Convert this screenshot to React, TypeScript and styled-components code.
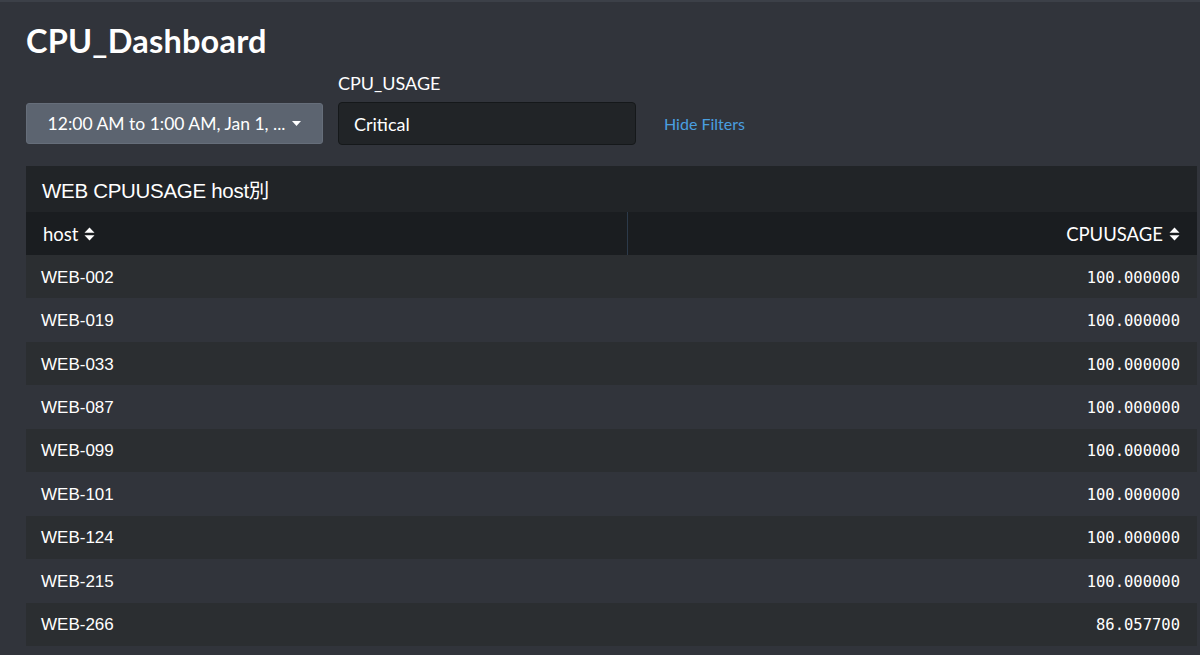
import styled, { createGlobalStyle } from "styled-components";

const rows = [
  { host: "WEB-002", usage: "100.000000" },
  { host: "WEB-019", usage: "100.000000" },
  { host: "WEB-033", usage: "100.000000" },
  { host: "WEB-087", usage: "100.000000" },
  { host: "WEB-099", usage: "100.000000" },
  { host: "WEB-101", usage: "100.000000" },
  { host: "WEB-124", usage: "100.000000" },
  { host: "WEB-215", usage: "100.000000" },
  { host: "WEB-266", usage: "86.057700" },
];

const GlobalStyle = createGlobalStyle`
  html, body {
    margin: 0;
    padding: 0;
    background: #31343b;
    overflow: hidden;
  }
`;

const SortIcon = () => (
  <svg width="11" height="14" viewBox="0 0 11 14">
    <path d="M5.5 0.5 L10.5 5.8 H0.5 Z" fill="currentColor" />
    <path d="M5.5 13.5 L10.5 8.2 H0.5 Z" fill="currentColor" />
  </svg>
);

const Caret = () => (
  <svg width="9" height="5" viewBox="0 0 9 5">
    <path d="M0 0 H9 L4.5 5 Z" fill="currentColor" />
  </svg>
);

const App = () => {
  return (
    <>
      <GlobalStyle />
      <Page>
        <Title>CPU_Dashboard</Title>
        <Filters>
          <FilterField>
            <FilterLabel />
            <TimeButton>
              12:00 AM to 1:00 AM, Jan 1, ...
              <Caret />
            </TimeButton>
          </FilterField>
          <FilterField>
            <FilterLabel>CPU_USAGE</FilterLabel>
            <TextInput>Critical</TextInput>
          </FilterField>
          <HideLink>Hide Filters</HideLink>
        </Filters>
        <Panel>
          <PanelTitle>WEB CPUUSAGE host別</PanelTitle>
          <Table>
            <HeadRow>
              <HeadCell>
                host <SortIcon />
              </HeadCell>
              <HeadCell $right>
                CPUUSAGE <SortIcon />
              </HeadCell>
            </HeadRow>
            {rows.map((r, i) => (
              <Row key={r.host} $odd={i % 2 === 1}>
                <HostCell>{r.host}</HostCell>
                <NumCell>{r.usage}</NumCell>
              </Row>
            ))}
          </Table>
        </Panel>
      </Page>
    </>
  );
};

export default App;

// ─── Styled Components ───────────────────────────────────────
const Page = styled.div`
  width: 1200px;
  height: 655px;
  box-sizing: border-box;
  border-top: 2px solid #3c4048;
  padding: 21px 3px 0 26px;
  background: #31343b;
  color: #ffffff;
  font-family: "Lato", "Liberation Sans", sans-serif;
`;

const Title = styled.h1`
  margin: 0;
  font-size: 32.5px;
  line-height: 36px;
  font-weight: 700;
  color: #ffffff;
  letter-spacing: 0.2px;
`;

const Filters = styled.div`
  display: flex;
  align-items: flex-end;
  gap: 15px;
  margin-top: 14px;
`;

const FilterField = styled.div`
  display: flex;
  flex-direction: column;
  gap: 9px;
`;

const FilterLabel = styled.div`
  height: 20px;
  font-size: 18px;
  line-height: 20px;
  color: #ffffff;
`;

const TimeButton = styled.div`
  box-sizing: border-box;
  width: 297px;
  height: 41px;
  margin-bottom: 1px;
  display: flex;
  align-items: center;
  justify-content: center;
  gap: 7px;
  background: #5c6470;
  border: 1px solid #666e7a;
  border-radius: 3px;
  font-size: 17.5px;
  color: #ffffff;
`;

const TextInput = styled.div`
  box-sizing: border-box;
  width: 298px;
  height: 43px;
  display: flex;
  align-items: center;
  padding-left: 15px;
  background: #212427;
  border: 1px solid #15181a;
  border-radius: 4px;
  font-size: 18px;
  color: #ffffff;
`;

const HideLink = styled.div`
  height: 43px;
  display: flex;
  align-items: center;
  margin-left: 13px;
  font-size: 16px;
  color: #4a9fe0;
`;

const Panel = styled.div`
  margin-top: 21px;
  background: #222528;
`;

const PanelTitle = styled.div`
  height: 46px;
  box-sizing: border-box;
  padding: 13px 0 0 16px;
  font-family: "Liberation Sans", "Noto Sans CJK JP", sans-serif;
  font-size: 20.5px;
  line-height: 24px;
  letter-spacing: -0.3px;
  color: #ffffff;
  background: #212427;
`;

const Table = styled.div`
  display: flex;
  flex-direction: column;
`;

const HeadRow = styled.div`
  display: grid;
  grid-template-columns: 602px 1fr;
  height: 43px;
  background: #1a1d20;
`;

const HeadCell = styled.div<{ $right?: boolean }>`
  display: flex;
  align-items: center;
  justify-content: ${({ $right }) => ($right ? "flex-end" : "flex-start")};
  gap: 6px;
  padding: 0 ${({ $right }) => ($right ? "17px" : "0")} 0
    ${({ $right }) => ($right ? "0" : "17px")};
  font-size: 18.5px;
  color: #ffffff;
  border-right: ${({ $right }) => ($right ? "none" : "1px solid #2c3a4a")};
`;

const Row = styled.div<{ $odd: boolean }>`
  display: flex;
  align-items: center;
  justify-content: space-between;
  height: 43.44px;
  padding: 2px 17px 0 15px;
  box-sizing: border-box;
  background: ${({ $odd }) => ($odd ? "#31343b" : "#2b2e31")};
`;

const HostCell = styled.div`
  font-family: "Liberation Sans", sans-serif;
  font-size: 17px;
  color: #ffffff;
`;

const NumCell = styled.div`
  font-family: "DejaVu Sans Mono", monospace;
  font-size: 15.5px;
  color: #ffffff;
`;
